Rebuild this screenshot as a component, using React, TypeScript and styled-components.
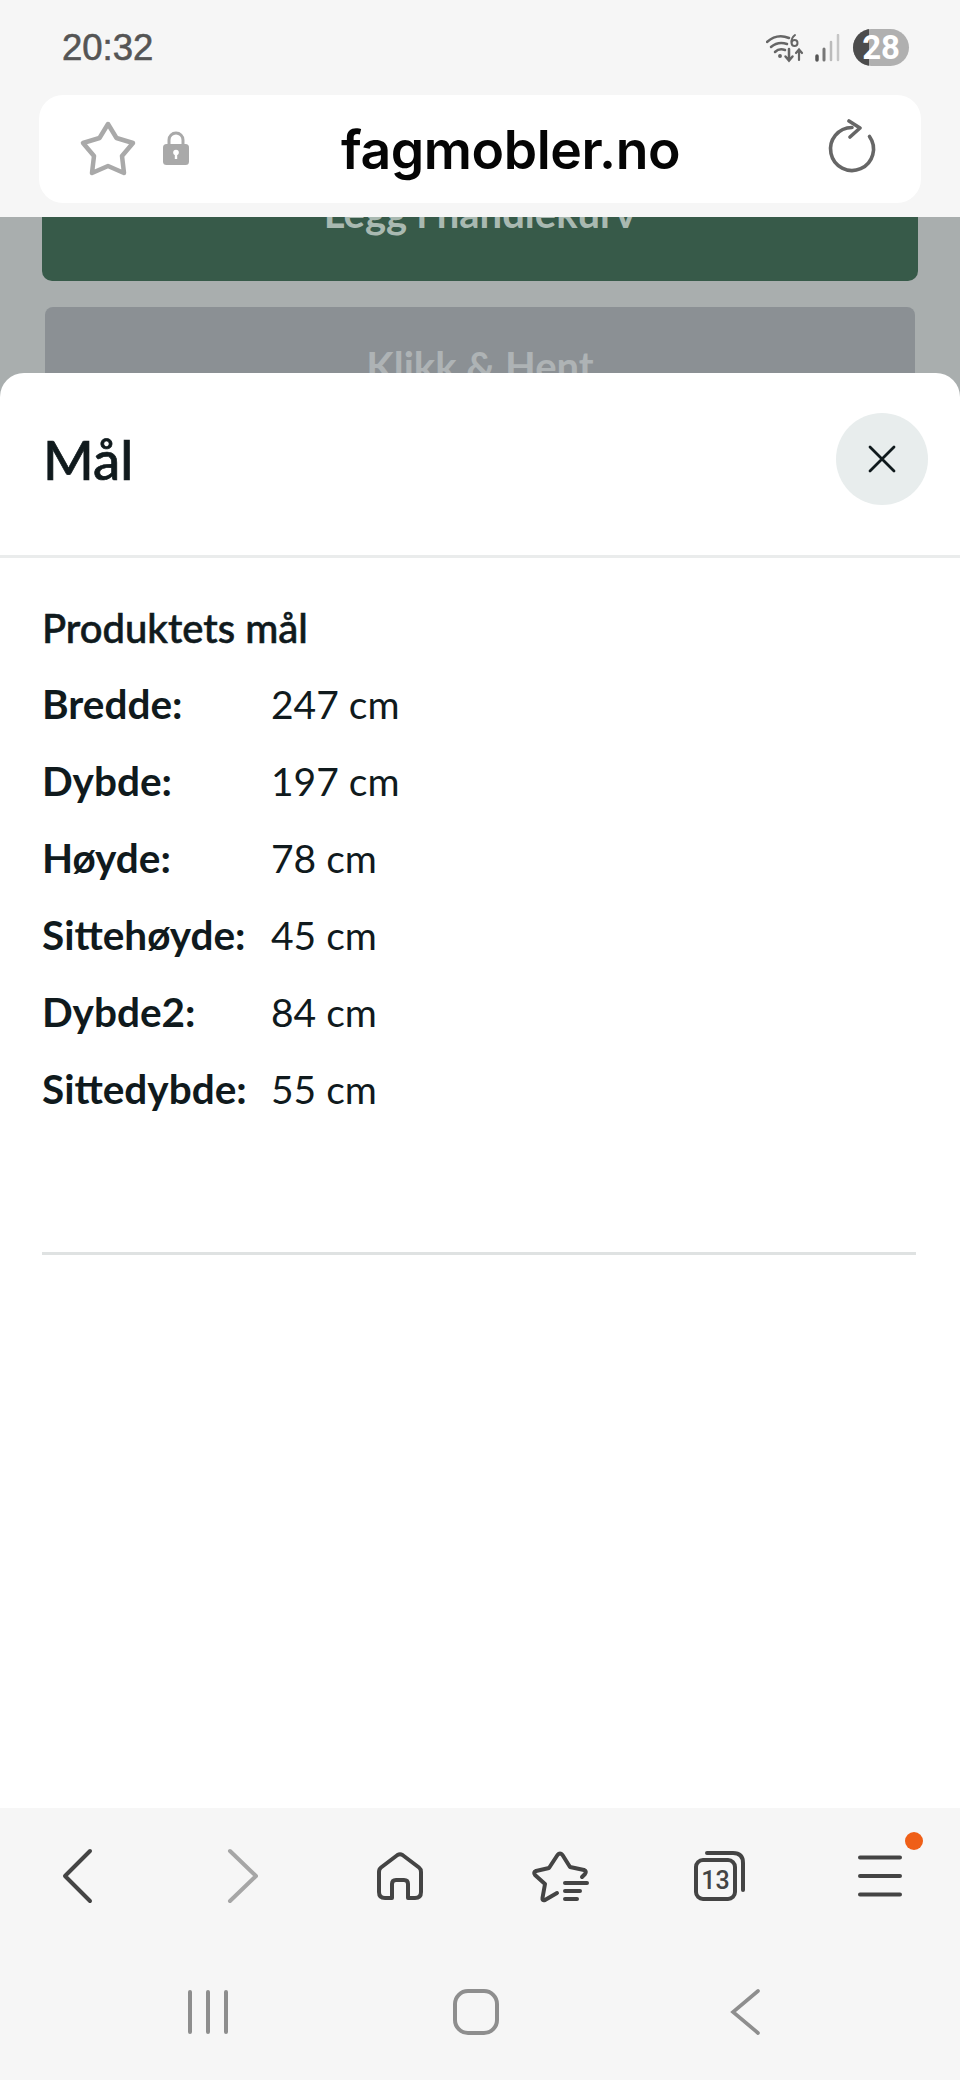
import React from "react";
import styled, { createGlobalStyle } from "styled-components";

const GlobalStyle = createGlobalStyle`
  html, body {
    margin: 0;
    padding: 0;
    background: #a9aeae;
  }
  * {
    box-sizing: border-box;
  }
`;

const Phone = styled.div`
  width: 960px;
  height: 2080px;
  display: flex;
  flex-direction: column;
  overflow: hidden;
  background: #a9aeae;
  font-family: Lato, "Liberation Sans", sans-serif;
`;

const BrowserTop = styled.header`
  height: 217px;
  flex-shrink: 0;
  background: #f6f6f6;
  padding: 0 39px;
  display: flex;
  flex-direction: column;
`;

const StatusBar = styled.div`
  height: 95px;
  flex-shrink: 0;
  padding: 0 12px 0 23px;
  display: flex;
  align-items: center;
  justify-content: space-between;
`;

const Clock = styled.span`
  font-family: "Liberation Sans", Arial, sans-serif;
  font-size: 36.5px;
  color: #555555;
  -webkit-text-stroke: 0.6px #555555;
`;

const StatusIcons = styled.div`
  display: flex;
  align-items: center;
  gap: 8px;
`;

const Battery = styled.div`
  position: relative;
  width: 56px;
  height: 37px;
  margin-left: 5px;
  border-radius: 19px;
  background: #b0b0b0;
  overflow: hidden;
  display: flex;
  align-items: center;
  justify-content: flex-end;
  padding-right: 9px;
  font-family: Roboto, sans-serif;
  font-weight: 700;
  font-size: 33px;
  color: #ffffff;
`;

const BatteryLevel = styled.span`
  position: absolute;
  left: 0;
  top: 0;
  bottom: 0;
  width: 16px;
  background: #4c4c4c;
`;

const BatteryText = styled.span`
  position: relative;
`;

const UrlBar = styled.div`
  height: 108px;
  background: #ffffff;
  border-radius: 24px;
  padding: 0 39px;
  display: flex;
  align-items: center;
`;

const LockIcon = styled.svg`
  margin-left: 22px;
`;

const UrlText = styled.span`
  margin-left: 149px;
  font-family: Inter, Roboto, sans-serif;
  font-weight: 600;
  font-size: 53.5px;
  letter-spacing: -0.4px;
  color: #050505;
`;

const ReloadIcon = styled.svg`
  margin-left: auto;
`;

const Backdrop = styled.div`
  flex: 1;
  min-height: 0;
  display: flex;
  flex-direction: column;
  background: #a9aeae;
`;

const PageBehind = styled.div`
  height: 156px;
  flex-shrink: 0;
  overflow: hidden;
  padding: 0 42px;
`;

const BuyButton = styled.div`
  height: 136px;
  margin-top: -72px;
  border-radius: 10px;
  background: #375a49;
  color: #a9b9b1;
  font-weight: 700;
  font-size: 40px;
  display: flex;
  align-items: center;
  justify-content: center;
`;

const PickupButton = styled.div`
  height: 118px;
  margin: 26px 3px 0;
  border-radius: 8px;
  background: #8b9094;
  color: #aeb3b5;
  font-weight: 700;
  font-size: 40px;
  display: flex;
  align-items: center;
  justify-content: center;
`;

const Sheet = styled.section`
  flex: 1;
  min-height: 0;
  background: #ffffff;
  border-radius: 24px 24px 0 0;
  display: flex;
  flex-direction: column;
`;

const SheetHeader = styled.div`
  height: 185px;
  flex-shrink: 0;
  padding: 0 32px 10px 43px;
  border-bottom: 3px solid #eaecec;
  display: flex;
  align-items: center;
  justify-content: space-between;
`;

const SheetTitle = styled.h2`
  margin: 0;
  font-weight: 500;
  font-size: 54.5px;
  color: #101a1d;
  -webkit-text-stroke: 0.7px #101a1d;
`;

const CloseButton = styled.button`
  width: 92px;
  height: 92px;
  padding: 0;
  border: none;
  border-radius: 50%;
  background: #e8eded;
  display: flex;
  align-items: center;
  justify-content: center;
`;

const SheetBody = styled.div`
  padding: 45px 44px 0 42px;
`;

const SectionTitle = styled.h3`
  margin: 0;
  font-weight: 500;
  font-size: 40px;
  line-height: 50px;
  color: #101a1d;
  -webkit-text-stroke: 0.6px #101a1d;
`;

const SizeList = styled.dl`
  margin: 12px 0 0;
  display: grid;
  grid-template-columns: 229px 1fr;
  grid-auto-rows: 77px;
  align-items: center;
  color: #101a1d;
  font-size: 39px;
`;

const SizeLabel = styled.dt`
  font-weight: 700;
  font-size: 40.5px;
`;

const SizeValue = styled.dd`
  margin: 0;
`;

const SheetRule = styled.hr`
  margin: 125px 0 0;
  border: none;
  border-top: 3px solid #dfe2e2;
`;

const BrowserBottom = styled.footer`
  flex-shrink: 0;
  background: #f6f6f6;
`;

const NavRow = styled.nav`
  height: 136px;
  display: grid;
  grid-template-columns: repeat(6, 160px);
`;

const NavCell = styled.div`
  position: relative;
  display: flex;
  align-items: center;
  justify-content: center;
`;

const NoticeDot = styled.span`
  position: absolute;
  top: 24px;
  right: 37px;
  width: 18px;
  height: 18px;
  border-radius: 50%;
  background: #ef5f17;
`;

const SystemRow = styled.div`
  height: 136px;
  padding-left: 74px;
  display: grid;
  grid-template-columns: repeat(3, 268px);
  align-items: center;
  justify-items: center;
`;

const TabCount = styled.text`
  font-family: Roboto, sans-serif;
  font-size: 25px;
  font-weight: 500;
  fill: #444444;
`;

const sizes = [
  { label: "Bredde:", value: "247 cm" },
  { label: "Dybde:", value: "197 cm" },
  { label: "Høyde:", value: "78 cm" },
  { label: "Sittehøyde:", value: "45 cm" },
  { label: "Dybde2:", value: "84 cm" },
  { label: "Sittedybde:", value: "55 cm" },
];

const NavIcon: React.FC<{ color?: string; children: React.ReactNode }> = ({
  color = "#444444",
  children,
}) => (
  <svg
    width="60"
    height="60"
    viewBox="0 0 60 60"
    fill="none"
    stroke={color}
    strokeWidth="4"
    strokeLinecap="round"
    strokeLinejoin="round"
  >
    {children}
  </svg>
);

const App: React.FC = () => {
  return (
    <Phone>
      <GlobalStyle />
      <BrowserTop>
        <StatusBar>
          <Clock>20:32</Clock>
          <StatusIcons>
            <svg width="40" height="30" viewBox="0 0 40 30" fill="none" stroke="#666666" strokeLinecap="round">
              <path d="M1 9 Q11 0 23 5" strokeWidth="2.5" />
              <path d="M5 14 Q12 8 21 11" strokeWidth="2.5" />
              <path d="M9 19 Q13 15 19 17" strokeWidth="2.5" />
              <circle cx="14" cy="23" r="1.2" fill="#666666" strokeWidth="1.5" />
              <path d="M29 2 Q25 5 25.5 10 Q26 13 28.5 13 Q31.5 13 31.5 10 Q31.5 7 28.5 7 Q26 7 25.5 10" strokeWidth="2" />
              <path d="M23 16 V27 M19.5 23.5 L23 27.5 L26.5 23.5" strokeWidth="2.5" />
              <path d="M33 27 V17 M30 20 L33 16.5 L36 20" strokeWidth="2.2" />
            </svg>
            <svg width="26" height="28" viewBox="0 0 26 28" strokeLinecap="round">
              <path d="M3 26 V22" stroke="#555555" strokeWidth="3.5" />
              <path d="M10 26 V15" stroke="#777777" strokeWidth="3" />
              <path d="M17 26 V8" stroke="#bbbbbb" strokeWidth="2.5" />
              <path d="M24 26 V1" stroke="#c6c6c6" strokeWidth="2.5" />
            </svg>
            <Battery>
              <BatteryLevel />
              <BatteryText>28</BatteryText>
            </Battery>
          </StatusIcons>
        </StatusBar>
        <UrlBar>
          <svg width="60" height="60" viewBox="0 0 60 60" fill="none" stroke="#a9a9a9" strokeWidth="4.5" strokeLinejoin="round">
            <path d="M30 5 L38.5 19 L55 24 L44 37 L46 54 L30 47 L14 54 L16 37 L5 24 L21.5 19 Z" />
          </svg>
          <LockIcon width="32" height="40" viewBox="0 0 32 40">
            <path d="M9 17 V11 A7 7 0 0 1 23 11 V17" fill="none" stroke="#a9a9a9" strokeWidth="3" />
            <rect x="3" y="15" width="26" height="21" rx="3.5" fill="#a9a9a9" />
            <circle cx="16" cy="23.5" r="2.8" fill="#ffffff" />
            <rect x="14.8" y="24" width="2.4" height="6" fill="#ffffff" />
          </LockIcon>
          <UrlText>fagmobler.no</UrlText>
          <ReloadIcon width="60" height="60" viewBox="0 0 60 60" fill="none" stroke="#666666" strokeWidth="3.6" strokeLinecap="round" strokeLinejoin="round">
            <path d="M47.5 17.5 A21.5 21.5 0 1 1 30 8.5" />
            <path d="M27 2 L38 9 L28 18" />
          </ReloadIcon>
        </UrlBar>
      </BrowserTop>

      <Backdrop>
        <PageBehind>
          <BuyButton>Legg i handlekurv</BuyButton>
          <PickupButton>Klikk &amp; Hent</PickupButton>
        </PageBehind>
        <Sheet>
          <SheetHeader>
            <SheetTitle>Mål</SheetTitle>
            <CloseButton aria-label="Lukk">
              <svg width="30" height="30" viewBox="0 0 30 30" fill="none" stroke="#101a1d" strokeWidth="2.8" strokeLinecap="round">
                <path d="M3 3 L27 27 M27 3 L3 27" />
              </svg>
            </CloseButton>
          </SheetHeader>
          <SheetBody>
            <SectionTitle>Produktets mål</SectionTitle>
            <SizeList>
              {sizes.map((size) => (
                <React.Fragment key={size.label}>
                  <SizeLabel>{size.label}</SizeLabel>
                  <SizeValue>{size.value}</SizeValue>
                </React.Fragment>
              ))}
            </SizeList>
            <SheetRule />
          </SheetBody>
        </Sheet>
      </Backdrop>

      <BrowserBottom>
        <NavRow>
          <NavCell>
            <NavIcon>
              <path d="M40 5 L15 30 L40 55" />
            </NavIcon>
          </NavCell>
          <NavCell>
            <NavIcon color="#a6a6a6">
              <path d="M20 5 L46 30 L20 55" />
            </NavIcon>
          </NavCell>
          <NavCell>
            <NavIcon>
              <path d="M9 26 Q9 23 11 21.5 L27.5 9 Q30 7.5 32.5 9 L49 21.5 Q51 23 51 26 V46 Q51 52 45 52 H38 V38 Q38 34 34 34 H26 Q22 34 22 38 V52 H15 Q9 52 9 46 Z" />
            </NavIcon>
          </NavCell>
          <NavCell>
            <NavIcon>
              <path d="M27 47 L15 54 Q12 55 12.5 52 L15 38 L5 29 Q3 26 6 25 L19 22 L27.5 9 Q30 6 32.5 9 L40 21 L54 24 Q57 25 55 28 L52 31" />
              <path d="M35 37 H57 M35 45 H50 M35 53 H47" />
            </NavIcon>
          </NavCell>
          <NavCell>
            <NavIcon>
              <rect x="6" y="14" width="39" height="39" rx="7" />
              <path d="M17 7 H43 Q53 7 53 17 V44" />
              <TabCount x="25.5" y="43" textAnchor="middle" stroke="none">
                13
              </TabCount>
            </NavIcon>
          </NavCell>
          <NavCell>
            <NavIcon>
              <path d="M10 11.5 H50 M10 30 H50 M10 48.5 H50" />
            </NavIcon>
            <NoticeDot />
          </NavCell>
        </NavRow>
        <SystemRow>
          <svg width="44" height="44" viewBox="0 0 44 44" stroke="#8e8e8e" strokeWidth="4" strokeLinecap="round">
            <path d="M4 2 V42 M22 2 V42 M40 2 V42" />
          </svg>
          <svg width="46" height="46" viewBox="0 0 46 46" fill="none" stroke="#8e8e8e" strokeWidth="4">
            <rect x="2" y="2" width="42" height="42" rx="13" />
          </svg>
          <svg width="32" height="48" viewBox="0 0 32 48" fill="none" stroke="#8e8e8e" strokeWidth="3.6" strokeLinecap="round">
            <path d="M30 3 L5 24 L30 45" />
          </svg>
        </SystemRow>
      </BrowserBottom>
    </Phone>
  );
};

export default App;
